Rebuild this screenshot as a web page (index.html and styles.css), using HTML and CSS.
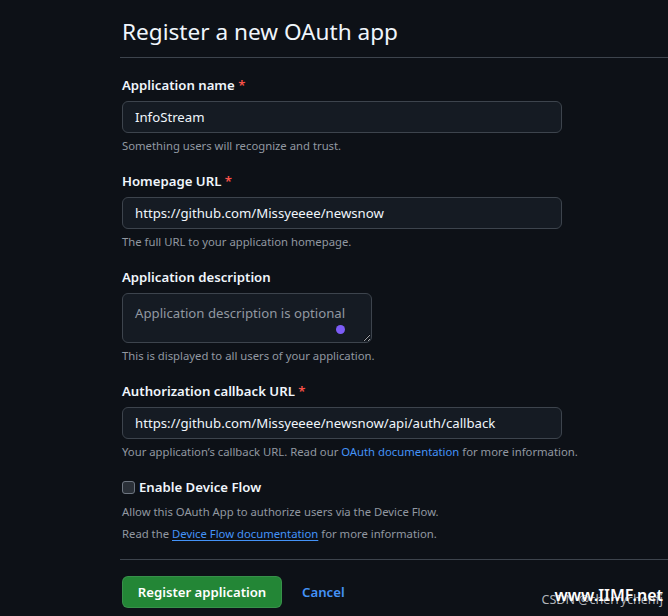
FILE: index.html
```html
<!DOCTYPE html>
<html lang="en">
<head>
<meta charset="utf-8">
<title>Register a new OAuth app</title>
<link rel="stylesheet" href="styles.css">
</head>
<body>
<main class="page">
  <h1 class="title">Register a new OAuth app</h1>
  <form class="form">
    <div class="field">
      <label class="label">Application name <span class="req">*</span></label>
      <input class="input" type="text" value="InfoStream">
      <p class="note">Something users will recognize and trust.</p>
    </div>
    <div class="field">
      <label class="label">Homepage URL <span class="req">*</span></label>
      <input class="input" type="text" value="https://github.com/Missyeeee/newsnow">
      <p class="note">The full URL to your application homepage.</p>
    </div>
    <div class="field">
      <label class="label">Application description</label>
      <div class="ta-wrap">
        <textarea class="textarea" placeholder="Application description is optional"></textarea>
        <span class="dot"></span>
      </div>
      <p class="note">This is displayed to all users of your application.</p>
    </div>
    <div class="field">
      <label class="label">Authorization callback URL <span class="req">*</span></label>
      <input class="input" type="text" value="https://github.com/Missyeeee/newsnow/api/auth/callback">
      <p class="note">Your application’s callback URL. Read our <a class="link" href="#">OAuth documentation</a> for more information.</p>
    </div>
    <div class="field">
      <label class="check-row"><input class="check" type="checkbox"><span>Enable Device Flow</span></label>
      <p class="note note-gap">Allow this OAuth App to authorize users via the Device Flow.</p>
      <p class="note">Read the <a class="link underline" href="#">Device Flow documentation</a> for more information.</p>
    </div>
    <div class="actions">
      <button class="btn-primary" type="button">Register application</button>
      <a class="cancel" href="#">Cancel</a>
    </div>
  </form>
  <div class="watermark"><span class="wm-csdn">CSDN @cherrychenfj</span><span class="wm-site">www.IIMF.net</span></div>
</main>
</body>
</html>
```
FILE: styles.css
```css
* { box-sizing: border-box; }
html, body {
  margin: 0;
  background: #0d1117;
  color: #f0f6fc;
  font-family: "Noto Sans", "Open Sans", sans-serif;
  color-scheme: dark;
}
body { overflow: hidden; height: 616px; }
.page {
  position: relative;
  padding-left: 122px;
  height: 616px;
}
.title {
  margin: 0 0 0 -2px;
  padding: 14px 0 7px 2px;
  font-size: 22.6px;
  font-weight: 400;
  line-height: 36px;
  border-bottom: 1px solid #3d444d;
}
.form { padding-top: 17px; }
.field { margin-bottom: 16px; }
.label {
  display: block;
  font-size: 13.2px;
  font-weight: 600;
  line-height: 21px;
  margin-bottom: 5px;
}
.req { color: #f85149; }
.input {
  display: block;
  width: 440px;
  height: 32px;
  padding: 0 12px;
  background: #151b23;
  border: 1px solid #3d444d;
  border-radius: 6px;
  color: #f0f6fc;
  font-family: inherit;
  font-size: 13.2px;
  outline: none;
}
.ta-wrap { position: relative; width: 250px; }
.textarea {
  display: block;
  width: 250px;
  height: 50px;
  padding: 9px 12px;
  background: #151b23;
  border: 1px solid #3d444d;
  border-radius: 6px;
  color: #f0f6fc;
  font-family: inherit;
  font-size: 13.2px;
  line-height: 20px;
  resize: both;
  outline: none;
}
.textarea::placeholder { color: #9198a1; }
.dot {
  position: absolute;
  left: 214px;
  top: 32px;
  width: 9px;
  height: 9px;
  border-radius: 50%;
  background: #7c5cf6;
}
.note {
  margin: 4px 0 0;
  font-size: 11.3px;
  line-height: 18px;
  color: #9198a1;
}
.note-gap { margin-top: 5px; }
.link { color: #4493f8; text-decoration: none; }
.underline { text-decoration: underline; text-underline-offset: 2px; }
.check-row {
  display: flex;
  align-items: center;
  gap: 4px;
  font-size: 13.2px;
  font-weight: 600;
  line-height: 21px;
}
.check {
  appearance: none;
  margin: 0;
  width: 13px;
  height: 13px;
  border: 1px solid #6e7681;
  border-radius: 3px;
  background: #2a3038;
}
.actions {
  border-top: 1px solid #3d444d;
  margin-left: -2px;
  padding: 16px 0 0 2px;
  display: flex;
  align-items: center;
  gap: 20px;
}
.btn-primary {
  width: 160px;
  height: 32px;
  padding: 0;
  background: #238636;
  color: #ffffff;
  border: 1px solid rgba(240,246,252,0.1);
  border-radius: 6px;
  font-family: inherit;
  font-size: 13.2px;
  font-weight: 600;
}
.cancel {
  color: #4493f8;
  font-size: 13.2px;
  font-weight: 600;
  text-decoration: none;
}
.watermark {
  position: absolute;
  right: 5px;
  bottom: 8px;
  width: 130px;
  height: 22px;
}
.wm-csdn {
  position: absolute;
  right: 0;
  bottom: 0;
  font-size: 12.5px;
  color: #b0b4ba;
  white-space: nowrap;
}
.wm-site {
  position: absolute;
  right: 0;
  bottom: 2px;
  font-size: 16px;
  font-weight: 600;
  color: #ffffff;
  white-space: nowrap;
}
```
